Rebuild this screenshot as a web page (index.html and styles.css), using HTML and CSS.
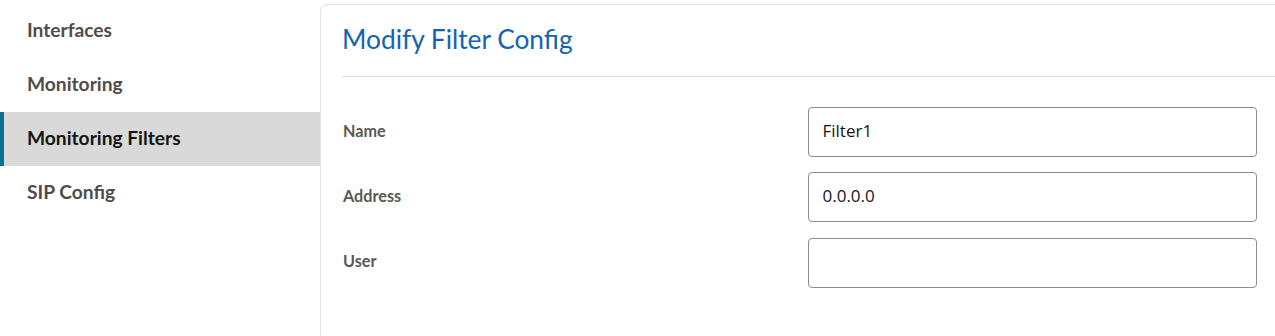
FILE: index.html
```html
<!DOCTYPE html>
<html>
<head>
<meta charset="utf-8">
<link rel="stylesheet" href="styles.css">
</head>
<body>
<div class="page">
  <nav class="sidebar">
    <a class="nav-item">Interfaces</a>
    <a class="nav-item">Monitoring</a>
    <a class="nav-item active">Monitoring Filters</a>
    <a class="nav-item">SIP Config</a>
  </nav>
  <main class="card">
    <header class="card-header">
      <h1 class="title">Modify Filter Config</h1>
    </header>
    <form class="form">
      <label class="label" for="f-name">Name</label>
      <input class="input" id="f-name" type="text" value="Filter1">
      <label class="label" for="f-addr">Address</label>
      <input class="input" id="f-addr" type="text" value="0.0.0.0">
      <label class="label" for="f-user">User</label>
      <input class="input" id="f-user" type="text" value="">
    </form>
  </main>
</div>
</body>
</html>
```
FILE: styles.css
```css
html, body {
  margin: 0;
  padding: 0;
  background: #ffffff;
  overflow: hidden;
}
body {
  font-family: Lato, "Noto Sans", sans-serif;
  width: 1275px;
  height: 336px;
}
.page {
  display: flex;
  align-items: flex-start;
  padding-top: 4px;
  height: 332px;
}
.sidebar {
  width: 320px;
  flex: 0 0 320px;
  display: flex;
  flex-direction: column;
}
.nav-item {
  display: flex;
  align-items: center;
  height: 54px;
  font-size: 19.2px;
  font-weight: 700;
  color: #4f4c4a;
  box-sizing: border-box;
  border-left: 4px solid transparent;
  padding-left: 23px;
  padding-bottom: 4px;
}
.nav-item.active {
  background: #d9d9d9;
  border-left-color: #0f6f90;
  color: #161513;
}
.card {
  flex: 0 0 auto;
  width: 975px;
  height: 340px;
  border: 1px solid #e3e3e3;
  border-radius: 7px;
  box-sizing: border-box;
}
.card-header {
  margin-left: 21px;
  height: 71px;
  border-bottom: 1px solid #dcdde0;
  display: flex;
  align-items: center;
}
.title {
  margin: 0;
  font-size: 26.3px;
  font-weight: 400;
  color: #1364b0;
  padding-bottom: 3px;
}
.form {
  display: grid;
  grid-template-columns: 1fr 1fr;
  column-gap: 16px;
  row-gap: 15px;
  align-items: center;
  padding: 30px 37px 0 21px;
}
.label {
  font-size: 16.2px;
  font-weight: 700;
  color: #5b5855;
  padding-left: 1px;
  padding-bottom: 4px;
}
.input {
  height: 50px;
  box-sizing: border-box;
  border: 1px solid #8c8c8c;
  border-radius: 4px;
  padding: 0 14px 3px;
  font-family: "Open Sans", "Noto Sans", sans-serif;
  font-size: 17px;
  color: #161513;
  background: #ffffff;
  outline: none;
  width: 100%;
}
.form .input:nth-of-type(3) {
  margin-top: 1px;
}
```
